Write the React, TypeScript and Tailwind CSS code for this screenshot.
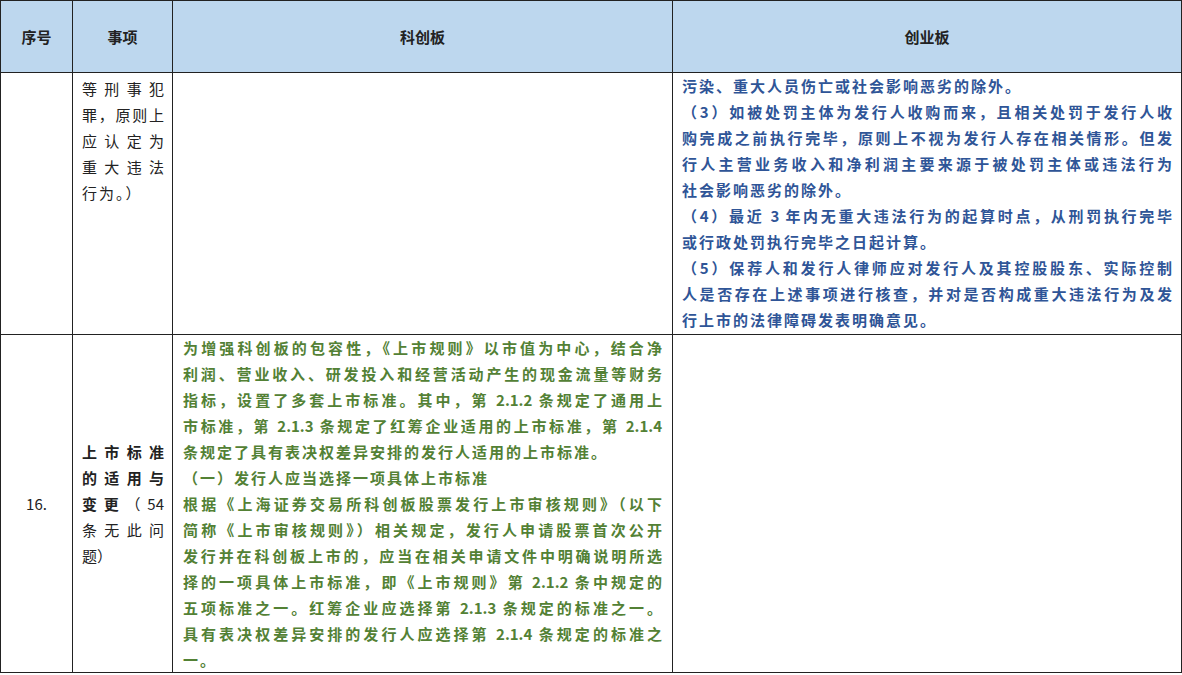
import React from "react";

const F = { fontFamily: '"Noto Sans CJK SC", "Noto Sans", sans-serif' };

function Lines({ lines, cls }: { lines: { t: string; last?: boolean }[]; cls: string }) {
  return (
    <div className={cls}>
      {lines.map((l, i) => (
        <div
          key={i}
          className={l.last ? "whitespace-nowrap tracking-[2px]" : "whitespace-nowrap [text-align:justify] [text-align-last:justify]"}
        >
          {l.t}
        </div>
      ))}
    </div>
  );
}

const row1c4 = [
  { t: "污染、重大人员伤亡或社会影响恶劣的除外。", last: true },
  { t: "（3）如被处罚主体为发行人收购而来，且相关处罚于发行人收" },
  { t: "购完成之前执行完毕，原则上不视为发行人存在相关情形。但发" },
  { t: "行人主营业务收入和净利润主要来源于被处罚主体或违法行为" },
  { t: "社会影响恶劣的除外。", last: true },
  { t: "（4）最近 3 年内无重大违法行为的起算时点，从刑罚执行完毕" },
  { t: "或行政处罚执行完毕之日起计算。", last: true },
  { t: "（5）保荐人和发行人律师应对发行人及其控股股东、实际控制" },
  { t: "人是否存在上述事项进行核查，并对是否构成重大违法行为及发" },
  { t: "行上市的法律障碍发表明确意见。", last: true },
];

const row2c3 = [
  { t: "为增强科创板的包容性，《上市规则》以市值为中心，结合净" },
  { t: "利润、营业收入、研发投入和经营活动产生的现金流量等财务" },
  { t: "指标，设置了多套上市标准。其中，第 2.1.2 条规定了通用上" },
  { t: "市标准，第 2.1.3 条规定了红筹企业适用的上市标准，第 2.1.4" },
  { t: "条规定了具有表决权差异安排的发行人适用的上市标准。", last: true },
  { t: "（一）发行人应当选择一项具体上市标准", last: true },
  { t: "根据《上海证券交易所科创板股票发行上市审核规则》（以下" },
  { t: "简称《上市审核规则》）相关规定，发行人申请股票首次公开" },
  { t: "发行并在科创板上市的，应当在相关申请文件中明确说明所选" },
  { t: "择的一项具体上市标准，即《上市规则》第 2.1.2 条中规定的" },
  { t: "五项标准之一。红筹企业应选择第 2.1.3 条规定的标准之一。" },
  { t: "具有表决权差异安排的发行人应选择第 2.1.4 条规定的标准之" },
  { t: "一。", last: true },
];

const c2a = [
  { t: "等刑事犯" },
  { t: "罪，原则上" },
  { t: "应认定为" },
  { t: "重大违法" },
  { t: "行为。）", last: true },
];

export default function App() {
  return (
    <div className="w-[1182px] h-[675px] bg-white overflow-hidden" style={F}>
      <div className="grid grid-cols-[72px_100px_500px_509px] border-l border-t border-[#222] text-[16px] leading-[26px]">
        {["序号", "事项", "科创板", "创业板"].map((h) => (
          <div
            key={h}
            className="h-[72px] bg-[#bdd7ee] border-r border-b border-[#222] flex items-center justify-center font-bold text-[#222] text-[15px]"
          >
            {h}
          </div>
        ))}
        <div className="h-[262px] border-r border-b border-[#222]" />
        <div className="h-[262px] border-r border-b border-[#222] pl-[9px] pr-[8px] pt-[3px] text-[#222] text-[15px]">
          <Lines lines={c2a} cls="" />
        </div>
        <div className="h-[262px] border-r border-b border-[#222]" />
        <div className="h-[262px] border-r border-b border-[#222] px-[9px] pt-[0px] text-[#2f5597] font-bold text-[15px]">
          <Lines lines={row1c4} cls="" />
        </div>
        <div className="h-[338px] border-r border-b border-[#222] flex items-center justify-center text-[15px] text-[#222]">
          16.
        </div>
        <div className="h-[338px] border-r border-b border-[#222] pl-[9px] pr-[8px] flex items-center text-[15px] text-[#222]">
          <div className="w-full">
            <div className="whitespace-nowrap [text-align:justify] [text-align-last:justify] font-bold">上市标准</div>
            <div className="whitespace-nowrap [text-align:justify] [text-align-last:justify] font-bold">的适用与</div>
            <div className="whitespace-nowrap [text-align:justify] [text-align-last:justify]"><b>变更</b>（54</div>
            <div className="whitespace-nowrap [text-align:justify] [text-align-last:justify]">条无此问</div>
            <div className="whitespace-nowrap">题）</div>
          </div>
        </div>
        <div className="h-[338px] border-r border-b border-[#222] px-[10px] pt-[0px] text-[#538135] font-bold text-[15px]">
          <Lines lines={row2c3} cls="" />
        </div>
        <div className="h-[338px] border-r border-b border-[#222]" />
      </div>
    </div>
  );
}
